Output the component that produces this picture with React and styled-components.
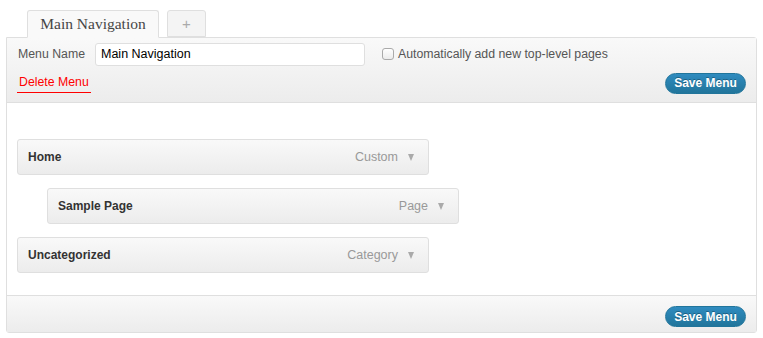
import React from 'react';
import styled, { createGlobalStyle } from 'styled-components';

const items = [
  { id: 1, title: 'Home', type: 'Custom', depth: 0 },
  { id: 2, title: 'Sample Page', type: 'Page', depth: 1 },
  { id: 3, title: 'Uncategorized', type: 'Category', depth: 0 }
];

export default function App() {
  return (
    <Root>
      <GlobalStyle />
      <Tabs>
        <Tab active>Main Navigation</Tab>
        <Tab>+</Tab>
      </Tabs>
      <Panel>
        <Header>
          <HeaderRow>
            <Label>Menu Name</Label>
            <NameInput defaultValue="Main Navigation" />
            <CheckLabel>
              <Checkbox type="checkbox" />
              Automatically add new top-level pages
            </CheckLabel>
          </HeaderRow>
          <HeaderRow spread>
            <DeleteLink href="#">Delete Menu</DeleteLink>
            <SaveButton>Save Menu</SaveButton>
          </HeaderRow>
        </Header>
        <Body>
          {items.map(item => (
            <Item key={item.id} depth={item.depth}>
              <ItemTitle>{item.title}</ItemTitle>
              <ItemType>{item.type}</ItemType>
              <Arrow />
            </Item>
          ))}
        </Body>
        <Footer>
          <SaveButton>Save Menu</SaveButton>
        </Footer>
      </Panel>
    </Root>
  );
}

const GlobalStyle = createGlobalStyle`
  body {
    margin: 0;
    background: #fff;
    font-family: "Liberation Sans", Arial, sans-serif;
    font-size: 12.3px;
    color: #333;
  }
`;

const Root = styled.div`
  padding: 10px 6px 0;
`;

const Tabs = styled.div`
  display: flex;
  gap: 8px;
  padding-left: 21px;
  margin-bottom: -1px;
  position: relative;
  z-index: 1;
`;

const Tab = styled.div`
  box-sizing: border-box;
  border: 1px solid #dfdfdf;
  border-bottom-color: ${props => (props.active ? '#f9f9f9' : '#dfdfdf')};
  border-radius: 3px 3px 0 0;
  background: ${props => (props.active ? '#f9f9f9' : '#f4f4f4')};
  display: flex;
  align-items: center;
  justify-content: center;
  white-space: nowrap;
  width: ${props => (props.active ? '132px' : '39px')};
  height: ${props => (props.active ? '28px' : '27px')};
  padding-bottom: ${props => (props.active ? '1px' : '0')};
  font-family: ${props =>
    props.active ? '"Liberation Serif", "Times New Roman", serif' : 'inherit'};
  font-size: ${props => (props.active ? '15.5px' : '15px')};
  color: ${props => (props.active ? '#464646' : '#aaa')};
`;

const Panel = styled.div`
  border: 1px solid #dfdfdf;
  border-radius: 0 3px 3px 3px;
  width: 751px;
  box-sizing: border-box;
`;

const Header = styled.div`
  background: linear-gradient(to bottom, #f9f9f9, #ececec);
  border-bottom: 1px solid #dfdfdf;
  padding: 4px 10px 0 11px;
  height: 65px;
  box-sizing: border-box;
`;

const HeaderRow = styled.div`
  display: flex;
  align-items: center;
  justify-content: ${props => (props.spread ? 'space-between' : 'flex-start')};
  height: ${props => (props.spread ? '32px' : '24px')};
  padding-top: ${props => (props.spread ? '1px' : '0')};
`;

const Label = styled.span`
  color: #555;
  margin-right: 10px;
`;

const NameInput = styled.input`
  width: 270px;
  height: 23px;
  box-sizing: border-box;
  border: 1px solid #dfdfdf;
  border-radius: 3px;
  background: #fff;
  font-family: "Liberation Sans", Arial, sans-serif;
  font-size: 12.5px;
  color: #000;
  padding: 0 5px;
  outline: none;
`;

const CheckLabel = styled.label`
  display: flex;
  align-items: center;
  margin-left: 17px;
  color: #555;
`;

const Checkbox = styled.input`
  appearance: none;
  width: 12px;
  height: 12px;
  margin: 0 4px 0 0;
  border: 1px solid #aaa;
  border-radius: 3px;
  background: linear-gradient(to bottom, #fff, #ececec);
`;

const DeleteLink = styled.a`
  color: #f00;
  text-decoration: none;
  padding: 2px 2px 2px;
  margin-left: -1px;
  border-bottom: 1px solid #f00;
  line-height: 15px;
`;

const SaveButton = styled.button`
  width: 81px;
  height: 21px;
  border: 1px solid #21759b;
  border-radius: 11px;
  background: linear-gradient(to bottom, #2f8bbf, #21759b);
  color: #fff;
  font-family: "Liberation Sans", Arial, sans-serif;
  font-weight: bold;
  font-size: 12px;
  text-shadow: 0 -1px 0 rgba(0, 0, 0, 0.3);
  padding: 0;
  cursor: pointer;
`;

const Body = styled.div`
  background: #fff;
  padding: 36px 10px 22px;
  display: flex;
  flex-direction: column;
  gap: 13px;
`;

const Item = styled.div`
  display: flex;
  align-items: center;
  width: 412px;
  height: 36px;
  box-sizing: border-box;
  margin-left: ${props => props.depth * 30}px;
  padding: 0 14px 0 10px;
  border: 1px solid #dfdfdf;
  border-radius: 3px;
  background: linear-gradient(to bottom, #f9f9f9, #ececec);
`;

const ItemTitle = styled.span`
  flex: 1;
  font-weight: bold;
  font-size: 12px;
  color: #333;
`;

const ItemType = styled.span`
  color: #999;
  font-size: 12.5px;
`;

const Arrow = styled.span`
  width: 0;
  height: 0;
  margin-left: 10px;
  border-left: 3.5px solid transparent;
  border-right: 3.5px solid transparent;
  border-top: 7px solid #aaa;
`;

const Footer = styled.div`
  background: linear-gradient(to bottom, #f9f9f9, #ececec);
  border-top: 1px solid #dfdfdf;
  display: flex;
  justify-content: flex-end;
  padding: 10px 10px 5px;
  height: 37px;
  box-sizing: border-box;
`;
